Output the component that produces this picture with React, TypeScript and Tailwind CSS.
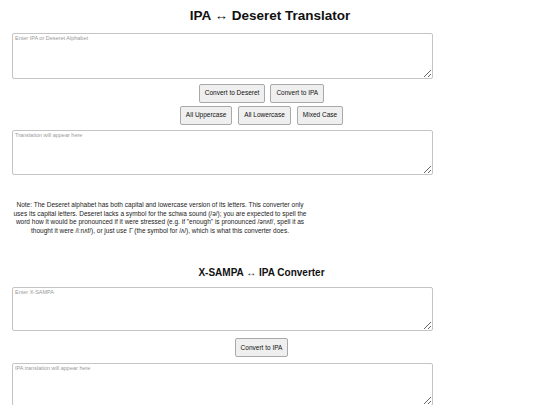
const FONT = { fontFamily: '"Liberation Sans", Arial, sans-serif' }

function Btn({ children }: { children: string }) {
  return (
    <button className="h-[19px] px-[5px] text-[6.5px] leading-none text-[#111] bg-[#efefef] border border-[#a9a9a9] rounded-[2px]">
      {children}
    </button>
  )
}

function Area({ placeholder, className = '' }: { placeholder: string; className?: string }) {
  return (
    <textarea
      placeholder={placeholder}
      className={`block ml-[12px] w-[421px] px-[2px] py-[1px] text-[5.5px] leading-[7px] border border-[#c4c4c4] rounded-[2px] placeholder:text-[#9a9a9a] outline-none ${className}`}
    />
  )
}

export default function App() {
  return (
    <div className="w-[540px] h-[405px] overflow-hidden bg-white text-[#111]" style={FONT}>
      <h1 className="pt-[8px] text-center text-[13.5px] leading-[16px] font-bold">IPA ↔ Deseret Translator</h1>

      <Area placeholder="Enter IPA or Deseret Alphabet" className="mt-[9px] h-[46px]" />

      <div className="ml-[12px] w-[499px] mt-[5px] flex justify-center gap-[5px]">
        <Btn>Convert to Deseret</Btn>
        <Btn>Convert to IPA</Btn>
      </div>
      <div className="ml-[12px] w-[499px] mt-[3px] flex justify-center gap-[6px]">
        <Btn>All Uppercase</Btn>
        <Btn>All Lowercase</Btn>
        <Btn>Mixed Case</Btn>
      </div>

      <Area placeholder="Translation will appear here" className="mt-[5px] h-[45px]" />

      <p className="ml-[12px] w-[296px] mt-[26px] text-center text-[6.5px] leading-[8.6px] text-[#222]">
        Note: The Deseret alphabet has both capital and lowercase version of its letters. This converter only uses its capital letters. Deseret lacks a symbol for the schwa sound (/ə/); you are expected to spell the word how it would be pronounced if it were stressed (e.g. if "enough" is pronounced /ənʌf/, spell it as thought it were /iːnʌf/), or just use 𐐊 (the symbol for /ʌ/), which is what this converter does.
      </p>

      <h2 className="ml-[12px] w-[499px] mt-[32px] text-center text-[10px] leading-[12px] font-bold">X-SAMPA ↔ IPA Converter</h2>

      <Area placeholder="Enter X-SAMPA" className="mt-[8px] h-[44px]" />

      <div className="ml-[12px] w-[499px] mt-[7px] flex justify-center">
        <Btn>Convert to IPA</Btn>
      </div>

      <Area placeholder="IPA translation will appear here" className="mt-[6px] h-[43px]" />
    </div>
  )
}
